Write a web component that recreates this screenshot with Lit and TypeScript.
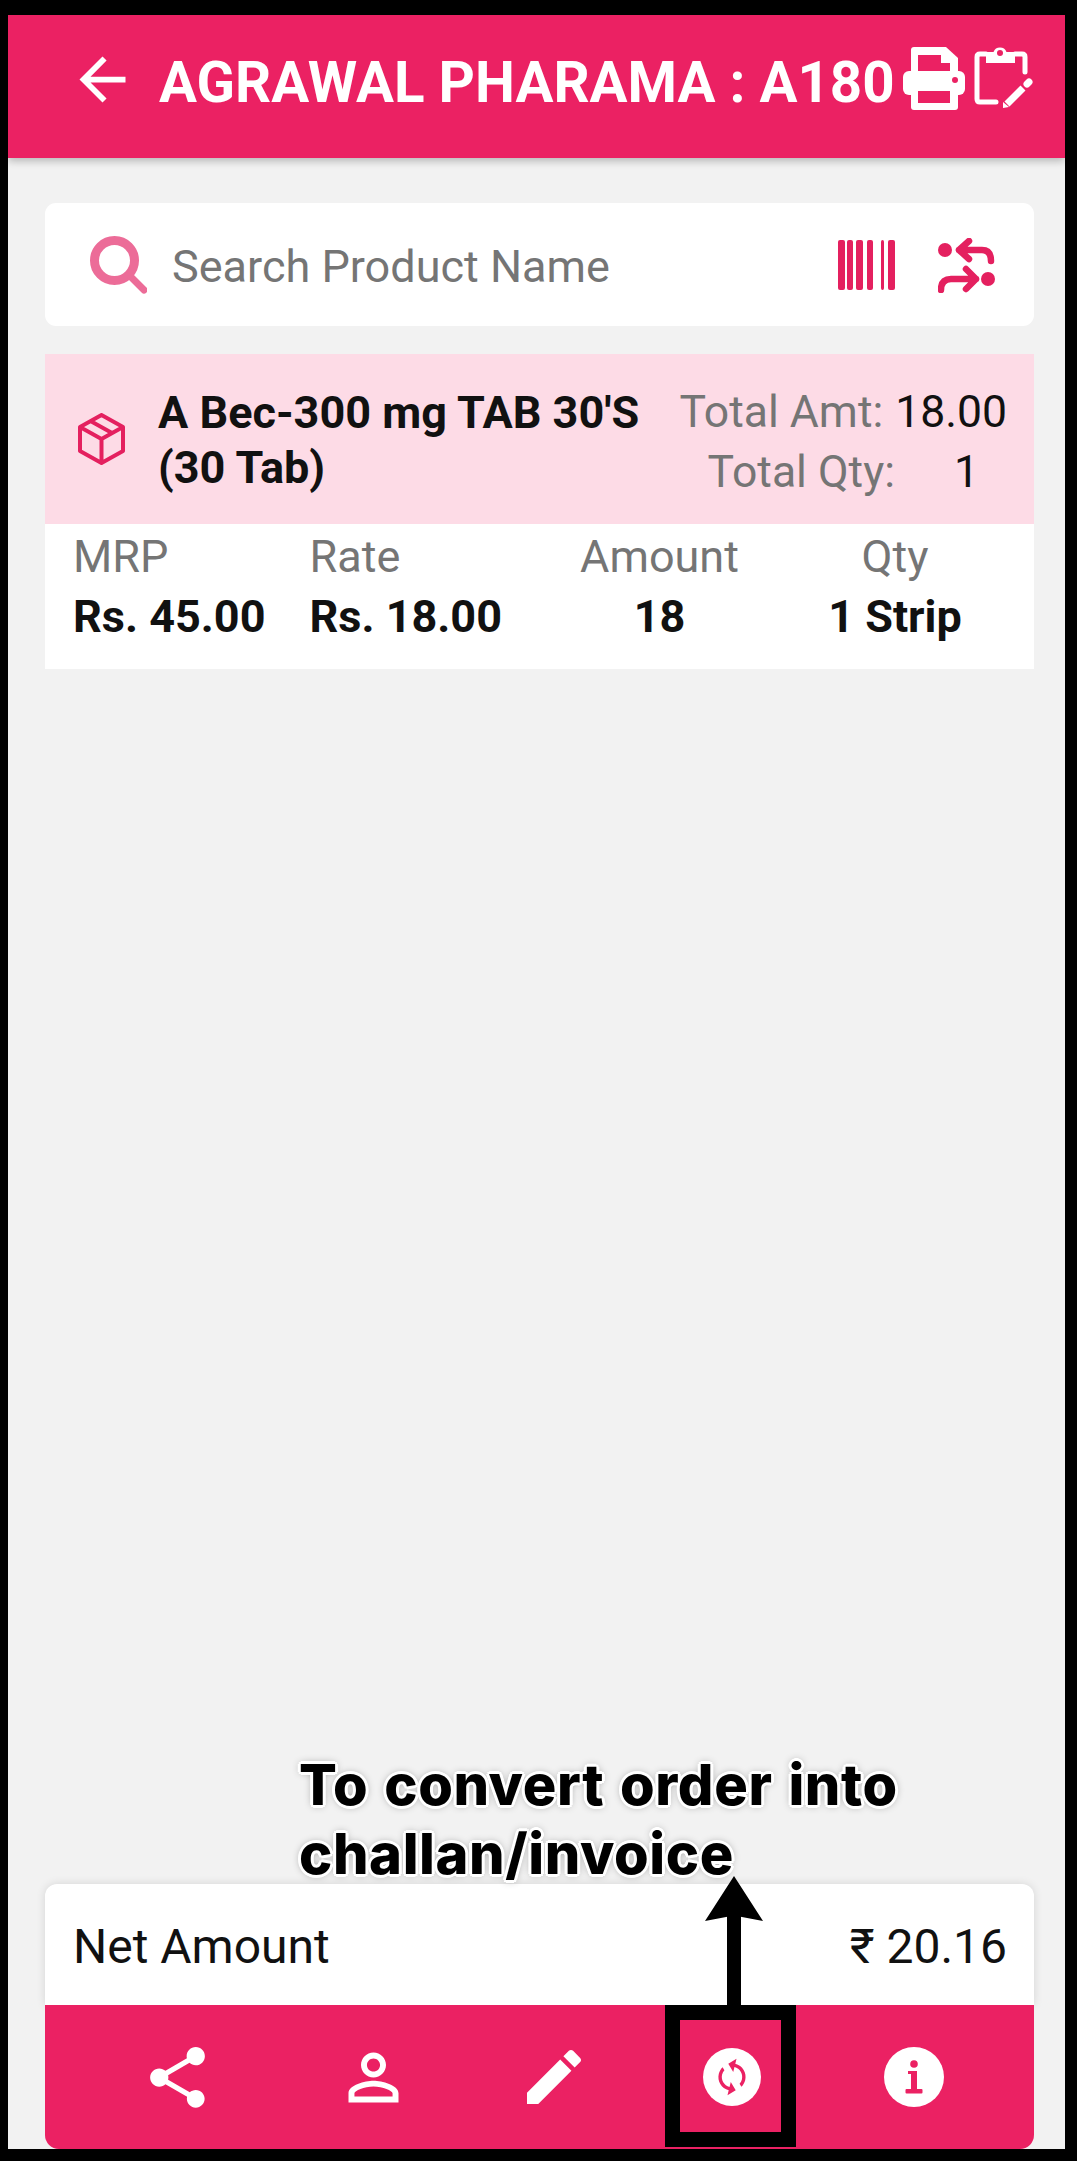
import { LitElement, html, css, svg } from 'lit';
import { customElement } from 'lit/decorators.js';

const PINK = '#eb2163';
const ICON = '#e4205f';

const columns = [
  { label: 'MRP', value: 'Rs. 45.00', center: false },
  { label: 'Rate', value: 'Rs. 18.00', center: false },
  { label: 'Amount', value: '18', center: true },
  { label: 'Qty', value: '1 Strip', center: true },
];

const bars = [[0, 7], [9, 6], [18, 7], [29, 6], [43, 3], [50, 7]];

const actions = [
  svg`<svg width="73" height="73" viewBox="0 0 24 24" fill="#fff"><path d="M18 16.08c-.76 0-1.44.3-1.96.77L8.91 12.7c.05-.23.09-.46.09-.7s-.04-.47-.09-.7l7.05-4.11c.54.5 1.25.81 2.04.81 1.66 0 3-1.34 3-3s-1.34-3-3-3-3 1.34-3 3c0 .24.04.47.09.7L8.04 9.81C7.5 9.31 6.79 9 6 9c-1.66 0-3 1.34-3 3s1.34 3 3 3c.79 0 1.5-.31 2.04-.81l7.12 4.16c-.05.21-.08.43-.08.65 0 1.61 1.31 2.92 2.92 2.92s2.92-1.31 2.92-2.92-1.31-2.92-2.92-2.92z"/></svg>`,
  svg`<svg width="75" height="75" viewBox="0 0 24 24" fill="#fff"><path d="M12 5.900c1.160 0 2.100.94 2.100 2.100s-.94 2.100-2.100 2.100S9.900 9.160 9.900 8s.94-2.100 2.100-2.100m0 9c2.970 0 6.100 1.460 6.100 2.100v1.100H5.900V17c0-.64 3.130-2.100 6.100-2.100M12 4C9.790 4 8 5.790 8 8s1.790 4 4 4 4-1.790 4-4-1.790-4-4-4zm0 9c-2.670 0-8 1.340-8 4v3h16v-3c0-2.660-5.330-4-8-4z"/></svg>`,
  svg`<svg width="72" height="72" viewBox="0 0 24 24" fill="#fff"><path d="M3 17.250V21h3.750L17.810 9.940l-3.750-3.750L3 17.250zM20.710 7.040c.39-.39.39-1.020 0-1.410l-2.340-2.340c-.39-.39-1.020-.39-1.410 0l-1.830 1.830 3.750 3.750 1.830-1.830z"/></svg>`,
  svg`<svg width="58" height="58" viewBox="0 0 58 58"><circle cx="29" cy="29" r="29" fill="#fff"/><g transform="translate(29 29) rotate(14) scale(1.7) translate(-12 -12)"><path fill="${PINK}" d="M12 4V1L8 5l4 4V6c3.310 0 6 2.690 6 6 0 1.010-.25 1.970-.7 2.800l1.460 1.460C19.540 15.030 20 13.570 20 12c0-4.420-3.580-8-8-8zm0 14c-3.310 0-6-2.690-6-6 0-1.010.25-1.970.7-2.800L5.240 7.740C4.460 8.970 4 10.430 4 12c0 4.420 3.580 8 8 8v3l4-4-4-4v3z"/></g></svg>`,
  svg`<svg width="60" height="60" viewBox="-30 -30 60 60"><circle r="30" fill="#fff"/><g fill="${PINK}"><circle cy="-13" r="3.800"/><rect x="-3" y="-6" width="6" height="19"/><rect x="-6" y="-6" width="4" height="3"/><rect x="-8.500" y="12" width="17" height="4.500" rx="1"/></g></svg>`,
];

@customElement('app-root')
export class AppRoot extends LitElement {
  render() {
    return html`
      <div class="frame">
        <header class="topbar">
          <svg class="back" width="69" height="69" viewBox="0 0 24 24" fill="#fff"><path d="M20 11H7.830l5.590-5.590L12 4l-8 8 8 8 1.410-1.410L7.830 13H20v-2z"/></svg>
          <span class="title">AGRAWAL PHARAMA : A180</span>
          <svg class="print" width="62" height="63" viewBox="0 0 62 63">
            <path fill="#fff" d="M11 0H43L55 11V30H8V3Q8 0 11 0Z"/>
            <path fill="${PINK}" d="M15 8H38V16H47V25H15Z"/>
            <rect y="24" width="62" height="24" rx="6" fill="#fff"/>
            <path fill="#fff" d="M8 40H55V60Q55 63 52 63H11Q8 63 8 60Z"/>
            <rect x="15" y="44" width="32" height="12" fill="${PINK}"/>
            <circle cx="52" cy="33" r="3" fill="${PINK}"/>
          </svg>
          <svg class="clip" width="59" height="62" viewBox="0 0 59 62">
            <path fill="none" stroke="#fff" stroke-width="5" stroke-linecap="round" d="M12 8H6Q3 8 3 11V53Q3 56 6 56H22M41 8H48Q51 8 51 11V26"/>
            <path fill="#fff" d="M12 6H19.500A7 7 0 0 1 32.500 6H41V17H12Z"/>
            <circle cx="26" cy="7" r="3" fill="${PINK}"/>
            <path fill="none" stroke="#fff" stroke-width="7" d="M33 58L49 42"/>
            <path fill="#fff" d="M29 62L29 56L35 61Z"/>
            <path fill="none" stroke="#fff" stroke-width="7" stroke-linecap="round" d="M53 38L55 36"/>
          </svg>
        </header>

        <main class="content">
          <div class="search">
            <svg class="lens" width="57" height="58" viewBox="0 0 57 58" fill="none" stroke="#ec6c98" stroke-linecap="round">
              <circle cx="24.500" cy="24.500" r="20" stroke-width="9"/>
              <path d="M41 41L54 54" stroke-width="7"/>
            </svg>
            <span class="placeholder">Search Product Name</span>
            <svg class="barcode" width="57" height="50" viewBox="0 0 57 50" fill="${ICON}">
              ${bars.map(([x, w]) => svg`<rect x=${x} width=${w} height="50" rx="2"/>`)}
            </svg>
            <svg class="swap" width="57" height="55" viewBox="0 0 57 55">
              <circle cx="7" cy="12" r="7" fill="${ICON}"/>
              <circle cx="50" cy="41" r="7" fill="${ICON}"/>
              <path fill="none" stroke="${ICON}" stroke-width="6.500" stroke-linecap="round" stroke-linejoin="round" d="M31 3L21 12L31 21M21 12H44Q53 12 53 23M28 31L38 41L28 51M38 41H13Q3 41 3 52"/>
            </svg>
          </div>

          <section class="item">
            <div class="item-head">
              <svg class="box" width="47" height="52" viewBox="0 0 47 52" fill="none" stroke="${ICON}" stroke-width="4" stroke-linejoin="round">
                <path d="M23.500 2L45 14V38L23.500 50L2 38V14ZM2 14L23.500 26L45 14M23.500 26V50M12.500 8L34 20"/>
              </svg>
              <div class="item-name">A Bec-300 mg TAB 30'S<br />(30 Tab)</div>
              <div class="totals">
                <div class="total amt"><span class="muted">Total Amt:</span><span>18.00</span></div>
                <div class="total qty"><span class="muted">Total Qty:</span><span>1</span></div>
              </div>
            </div>
            <div class="item-table">
              ${columns.map(
                (c) => html`<div class=${c.center ? 'col center' : 'col'}>
                  <span class="muted">${c.label}</span>
                  <b>${c.value}</b>
                </div>`
              )}
            </div>
          </section>
        </main>

        <footer class="summary">
          <div class="net"><span>Net Amount</span><span>₹ 20.16</span></div>
          <nav class="actions">
            ${actions.map((icon) => html`<div class="action">${icon}</div>`)}
          </nav>
        </footer>

        <div class="note">To convert order into<br />challan/invoice</div>
        <div class="highlight"></div>
        <div class="arrow-shaft"></div>
        <div class="arrow-head"></div>
      </div>
    `;
  }

  static styles = css`
    :host {
      display: block;
      font-family: Roboto, sans-serif;
    }

    .frame {
      position: relative;
      display: flex;
      flex-direction: column;
      box-sizing: border-box;
      width: 1077px;
      height: 2161px;
      overflow: hidden;
      padding: 15px 12px 12px 8px;
      background: #000;
    }

    .topbar {
      display: flex;
      align-items: flex-start;
      flex: none;
      height: 143px;
      background: #eb2163;
      color: #fff;
      box-shadow: 0 3px 8px rgba(0, 0, 0, 0.25);
      position: relative;
      z-index: 1;
    }

    .back {
      margin: 30px 0 0 60px;
      flex: none;
    }

    .title {
      margin: 38px 0 0 22px;
      width: 744px;
      font-size: 56.5px;
      line-height: 60px;
      font-weight: 700;
      white-space: nowrap;
    }

    .print {
      margin-top: 32px;
      flex: none;
    }

    .clip {
      margin: 31px 0 0 9px;
      flex: none;
    }

    .content {
      flex: 1;
      background: #f2f2f2;
      padding: 45px 31px 0 37px;
    }

    .search {
      display: flex;
      align-items: center;
      height: 123px;
      box-sizing: border-box;
      padding: 1px 39px 0 45px;
      background: #fff;
      border-radius: 11px;
    }

    .placeholder {
      margin-left: 25px;
      padding-top: 2px;
      flex: 1;
      font-size: 45px;
      color: #757575;
    }

    .barcode {
      margin-right: 43px;
    }

    .item {
      margin-top: 28px;
      background: #fff;
    }

    .item-head {
      display: flex;
      align-items: center;
      height: 170px;
      box-sizing: border-box;
      padding-left: 33px;
      background: #fddbe6;
      color: #111;
    }

    .box {
      flex: none;
      margin-right: 33px;
    }

    .item-name {
      flex: 1;
      padding-top: 1px;
      font-size: 45px;
      line-height: 55px;
      font-weight: 700;
      white-space: nowrap;
    }

    .totals {
      padding-top: 5px;
      font-size: 44.5px;
      line-height: 60px;
    }

    .total {
      display: flex;
      justify-content: flex-end;
    }

    .amt {
      gap: 12px;
      padding-right: 27px;
    }

    .qty {
      gap: 59px;
      padding-right: 55px;
    }

    .muted {
      color: #757575;
    }

    .item-table {
      display: grid;
      grid-template-columns: 236.5px 232px 236px 235px;
      height: 145px;
      box-sizing: border-box;
      padding: 3px 0 0 28px;
      font-size: 45px;
      line-height: 60px;
    }

    .col {
      display: flex;
      flex-direction: column;
    }

    .col.center {
      align-items: center;
    }

    .col b {
      font-weight: 700;
      color: #111;
    }

    .summary {
      flex: none;
      padding: 0 31px 0 37px;
      background: #f2f2f2;
    }

    .net {
      display: flex;
      align-items: center;
      justify-content: space-between;
      height: 121px;
      box-sizing: border-box;
      padding: 4px 27px 0 28px;
      background: #fff;
      border-radius: 12px 12px 0 0;
      box-shadow: 0 0 10px rgba(0, 0, 0, 0.12);
      font-size: 48px;
      color: #111;
    }

    .actions {
      display: grid;
      grid-template-columns: 184px 208px 154px 202px 162px;
      align-items: center;
      height: 144px;
      padding-left: 40px;
      background: #eb2163;
      border-radius: 0 0 14px 14px;
    }

    .action {
      display: flex;
      justify-content: center;
      align-items: center;
    }

    .note {
      position: absolute;
      left: 299px;
      top: 1751px;
      font-family: Inter, sans-serif;
      font-size: 56px;
      line-height: 69px;
      font-weight: 800;
      letter-spacing: 0.6px;
      word-spacing: 3px;
      color: #000;
      white-space: nowrap;
      text-shadow: 3px 0 0 #fff, -3px 0 0 #fff, 0 3px 0 #fff, 0 -3px 0 #fff,
        2px 2px 0 #fff, -2px 2px 0 #fff, 2px -2px 0 #fff, -2px -2px 0 #fff,
        0 0 8px rgba(0, 0, 0, 0.45);
    }

    .highlight {
      position: absolute;
      left: 665px;
      top: 2005px;
      width: 131px;
      height: 142px;
      box-sizing: border-box;
      border: 15px solid #000;
    }

    .arrow-shaft {
      position: absolute;
      left: 727px;
      top: 1915px;
      width: 14px;
      height: 92px;
      background: #000;
    }

    .arrow-head {
      position: absolute;
      left: 705px;
      top: 1876px;
      width: 58px;
      height: 45px;
      background: #000;
      clip-path: polygon(50% 0, 100% 100%, 50% 88%, 0 100%);
    }
  `;
}

declare global {
  interface HTMLElementTagNameMap {
    'app-root': AppRoot;
  }
}
